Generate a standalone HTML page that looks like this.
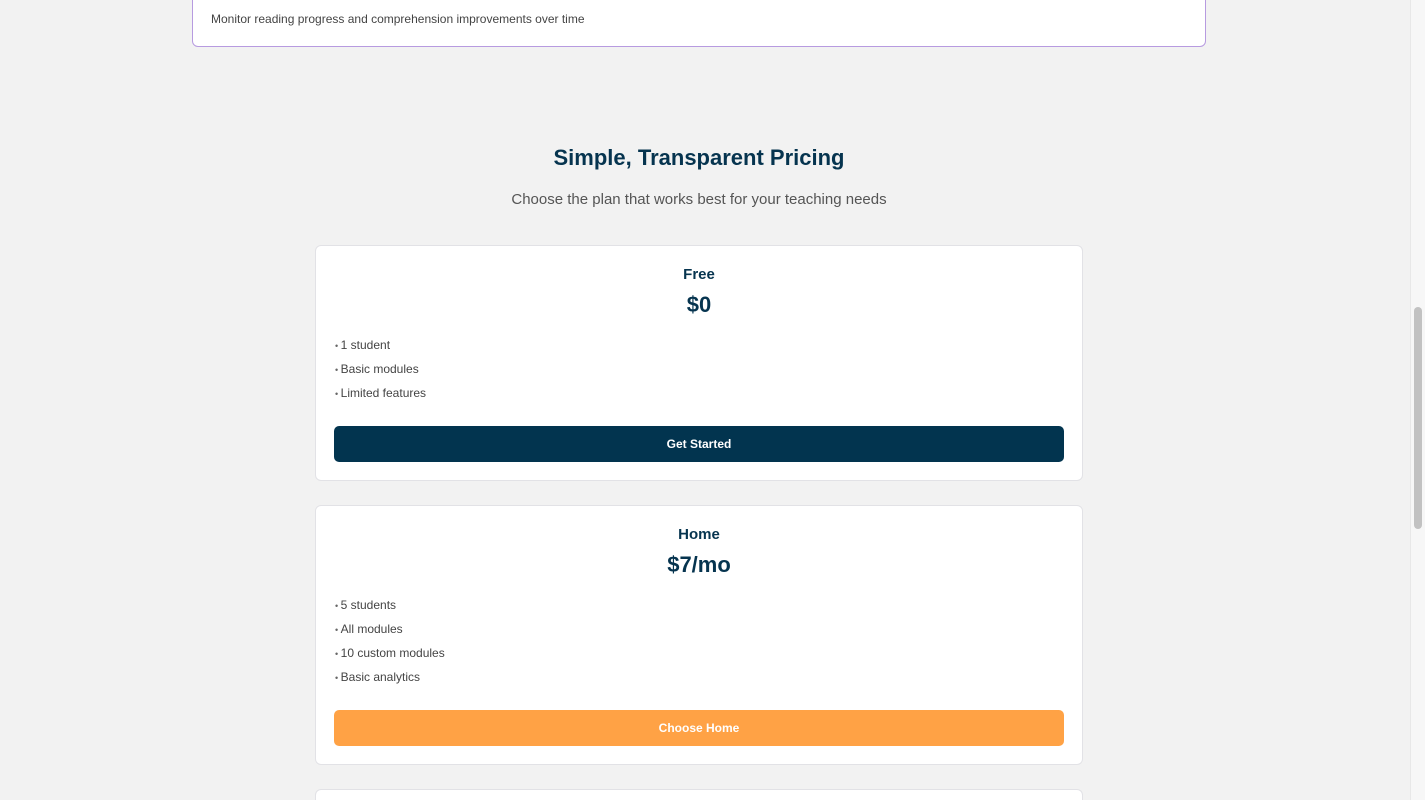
<!DOCTYPE html>
<html><head><meta charset="utf-8"><style>
*{box-sizing:border-box;margin:0;padding:0}
html,body{width:1425px;height:800px;overflow:hidden}
body{background:#f2f2f2;font-family:"Liberation Sans",sans-serif;position:relative}
.top{position:absolute;left:192px;top:-20px;width:1014px;height:67px;background:#fff;border:1px solid #b79be0;border-radius:0 0 6px 6px}
.top p{position:absolute;left:18px;top:31px;font-size:12px;color:#444}
h2{position:absolute;left:0;width:1398px;top:145px;text-align:center;font-size:22px;color:#06344f;font-weight:bold}
.sub{position:absolute;left:0;width:1398px;top:191px;text-align:center;font-size:15px;color:#555}
.card{position:absolute;left:315px;width:768px;background:#fff;border:1px solid #e2e2e6;border-radius:6px}
.card h3{text-align:center;font-size:15px;color:#06344f;margin-top:20px}
.card .pr{text-align:center;font-size:22px;font-weight:bold;color:#06344f;margin-top:9px}
.card ul{list-style:none;margin:20px 0 0 19px}
.card li{font-size:12px;color:#444;height:24px;line-height:14px}
.card li:before{content:"• ";font-size:9px;color:#666}
.btn{margin:16px 18px 0;height:36px;border-radius:5px;color:#fff;font-size:12px;font-weight:bold;text-align:center;line-height:36px}
.sb{position:absolute;right:0;top:0;width:15px;height:800px;background:#f7f7f7;border-left:1px solid #e8e8e8}
.sb div{position:absolute;left:3px;top:307px;width:8px;height:222px;border-radius:4px;background:#c2c2c2}
</style></head><body>
<div class="top"><p>Monitor reading progress and comprehension improvements over time</p></div>
<h2>Simple, Transparent Pricing</h2>
<div class="sub">Choose the plan that works best for your teaching needs</div>
<div class="card" style="top:245px;height:236px">
<h3>Free</h3><div class="pr">$0</div>
<ul><li>1 student</li><li>Basic modules</li><li>Limited features</li></ul>
<div class="btn" style="background:#02344f">Get Started</div></div>
<div class="card" style="top:505px;height:260px">
<h3>Home</h3><div class="pr">$7/mo</div>
<ul><li>5 students</li><li>All modules</li><li>10 custom modules</li><li>Basic analytics</li></ul>
<div class="btn" style="background:#ffa245">Choose Home</div></div>
<div class="card" style="top:789px;height:11px;border-bottom:none;border-radius:6px 6px 0 0"></div>
<div class="sb"><div></div></div>
</body></html>
